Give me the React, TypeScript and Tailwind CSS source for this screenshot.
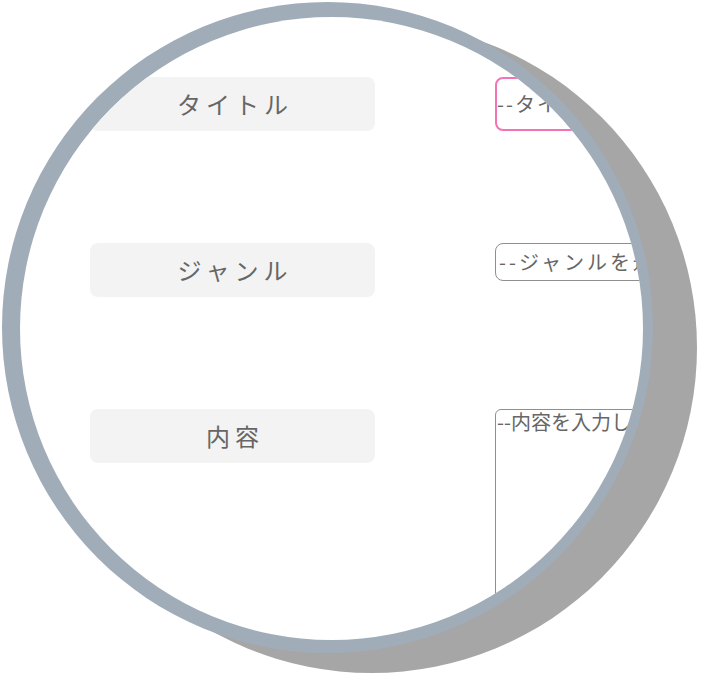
import React from "react";

const font = { fontFamily: '"Noto Sans CJK JP", "Noto Sans", sans-serif' };

const Label = ({ children }: { children: React.ReactNode }) => (
  <div className="flex h-[54px] w-[285px] shrink-0 items-center justify-center rounded-lg bg-[#f3f3f3] pl-[5px] text-[24px] tracking-[5px] text-[#666]">
    {children}
  </div>
);

export default function App() {
  return (
    <div className="h-[682px] w-[701px] bg-white pl-[2px] pt-[2px]" style={font}>
      {/* 円形のフォーム枠 */}
      <div className="h-[651px] w-[651px] rounded-full bg-[#a0adb8] pl-[18px] pt-[15px] shadow-[44px_20px_0_#a6a6a6]">
        <div className="h-[623px] w-[623px] overflow-hidden rounded-full bg-white">
          <div className="flex flex-col gap-[112px] pl-[70px] pt-[60px]">
            <div className="flex items-start gap-[120px]">
              <Label>タイトル</Label>
              <div className="flex h-[54px] w-[320px] shrink-0 items-center rounded-lg border-2 border-[#f472b6] text-[20px] tracking-[2px] text-[#666]">
                --タイトルを入力
              </div>
            </div>
            <div className="flex items-start gap-[120px]">
              <Label>ジャンル</Label>
              <div className="flex h-[38px] w-[320px] shrink-0 items-center rounded-lg border border-[#8f8f8f] pl-[3px] text-[20px] tracking-[3px] text-[#666]">
                --ジャンルを選択--
              </div>
            </div>
            <div className="flex items-start gap-[120px]">
              <Label>内容</Label>
              <div className="h-[260px] w-[320px] shrink-0 rounded-md border border-[#8f8f8f] pl-[1px] text-[20px] leading-[24px] text-[#666]">
                --内容を入力してください
              </div>
            </div>
          </div>
        </div>
      </div>
    </div>
  );
}
